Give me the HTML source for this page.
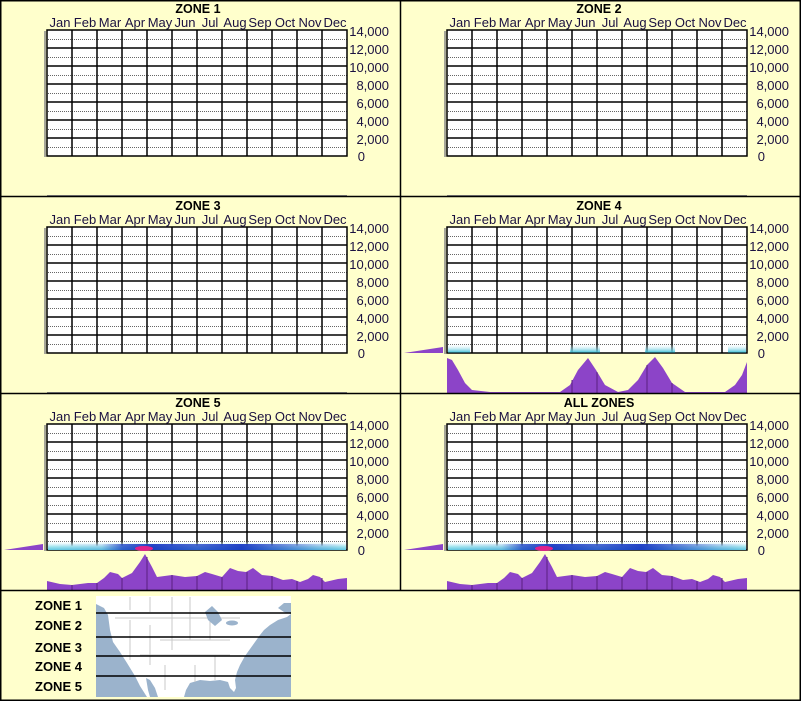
<!DOCTYPE html>
<html><head><meta charset="utf-8"><style>
html,body{margin:0;padding:0;background:#ffffcc;}
svg{display:block;font-family:"Liberation Sans",Arial,sans-serif;}
</style></head><body>
<svg width="801" height="701" viewBox="0 0 801 701" xmlns="http://www.w3.org/2000/svg">
<defs>
<linearGradient id="cy" x1="0" y1="0" x2="0" y2="1"><stop offset="0" stop-color="#fff" stop-opacity="0"/><stop offset="1" stop-color="#40c0d8"/></linearGradient>
<linearGradient id="lc" x1="0" y1="0" x2="0" y2="1"><stop offset="0" stop-color="#fff" stop-opacity="0"/><stop offset="0.6" stop-color="#a8e8f0"/><stop offset="1" stop-color="#60c8e0"/></linearGradient>
<linearGradient id="bh" x1="0" y1="0" x2="1" y2="0">
<stop offset="0" stop-color="#1030c0" stop-opacity="0"/>
<stop offset="0.18" stop-color="#1030c0" stop-opacity="0.1"/>
<stop offset="0.25" stop-color="#1030c0" stop-opacity="0.7"/>
<stop offset="0.35" stop-color="#1030c0" stop-opacity="0.9"/>
<stop offset="0.5" stop-color="#1030c0" stop-opacity="0.7"/>
<stop offset="0.65" stop-color="#1030c0" stop-opacity="0.9"/>
<stop offset="0.8" stop-color="#1030c0" stop-opacity="0.5"/>
<stop offset="0.9" stop-color="#1030c0" stop-opacity="0.2"/>
<stop offset="1" stop-color="#1030c0" stop-opacity="0"/>
</linearGradient>
<g id="panel">
<rect x="47" y="30" width="300" height="126" fill="#fff"/>
<g stroke="#666" stroke-width="1" stroke-dasharray="1,1">
<line x1="48" y1="39.5" x2="347" y2="39.5"/><line x1="48" y1="57.5" x2="347" y2="57.5"/><line x1="48" y1="75.5" x2="347" y2="75.5"/><line x1="48" y1="93.5" x2="347" y2="93.5"/><line x1="48" y1="111.5" x2="347" y2="111.5"/><line x1="48" y1="129.5" x2="347" y2="129.5"/><line x1="48" y1="147.5" x2="347" y2="147.5"/>
</g>
<g stroke="#000" stroke-width="1.5">
<line x1="47" y1="48" x2="347" y2="48"/><line x1="47" y1="66" x2="347" y2="66"/><line x1="47" y1="84" x2="347" y2="84"/><line x1="47" y1="102" x2="347" y2="102"/><line x1="47" y1="120" x2="347" y2="120"/><line x1="47" y1="138" x2="347" y2="138"/>
<line x1="72" y1="30" x2="72" y2="156"/><line x1="97" y1="30" x2="97" y2="156"/><line x1="122" y1="30" x2="122" y2="156"/><line x1="147" y1="30" x2="147" y2="156"/><line x1="172" y1="30" x2="172" y2="156"/><line x1="197" y1="30" x2="197" y2="156"/><line x1="222" y1="30" x2="222" y2="156"/><line x1="247" y1="30" x2="247" y2="156"/><line x1="272" y1="30" x2="272" y2="156"/><line x1="297" y1="30" x2="297" y2="156"/><line x1="322" y1="30" x2="322" y2="156"/>
</g>
<rect x="47" y="30" width="300" height="126" fill="none" stroke="#000" stroke-width="1.5"/>
<line x1="45" y1="31" x2="45" y2="157" stroke="#888" stroke-width="1.5"/>
</g>
<g id="heat">
<rect x="48" y="541" width="298" height="9" fill="url(#lc)"/>
<rect x="48" y="544" width="298" height="6" fill="url(#bh)"/>
<ellipse cx="144" cy="548.5" rx="9" ry="2.5" fill="#e0208a"/>
</g>
</defs>
<rect width="801" height="701" fill="#ffffcc"/>
<use href="#panel" x="0" y="0"/><use href="#panel" x="400" y="0"/>
<use href="#panel" x="0" y="197"/><use href="#panel" x="400" y="197"/>
<use href="#panel" x="0" y="394"/><use href="#panel" x="400" y="394"/>
<line x1="47" y1="196" x2="347" y2="196" stroke="#888" stroke-width="2"/>
<line x1="447" y1="196" x2="747" y2="196" stroke="#888" stroke-width="2"/>
<line x1="47" y1="393" x2="347" y2="393" stroke="#888" stroke-width="2"/>

<g fill="url(#cy)">
<rect x="448" y="344" width="22" height="8.5"/><rect x="570" y="344" width="30" height="8.5"/><rect x="645" y="344" width="30" height="8.5"/><rect x="728" y="344" width="18" height="8.5"/>
</g>
<polygon points="404,353 443,347 443,353" fill="#8c44c8"/>
<polygon points="447,393 447,358 452,360 458,370 465,383 472,390 490,392 560,392 570,385 578,370 588,358 596,370 605,385 618,392 628,390 638,380 647,365 655,357 663,368 672,383 685,392 725,392 735,385 742,375 747,362 747,393" fill="#8c44c8"/>
<g stroke="#5a2080" stroke-width="1"><line x1="572" y1="380" x2="572" y2="393"/><line x1="597" y1="372" x2="597" y2="393"/><line x1="647" y1="365" x2="647" y2="393"/><line x1="672" y1="383" x2="672" y2="393"/></g>

<use href="#heat"/>
<use href="#heat" x="400"/>
<polygon points="4,550 43,544 43,550" fill="#8c44c8"/>
<polygon points="404,550 443,544 443,550" fill="#8c44c8"/>
<g id="sp5"><polygon points="47,590 47,581 60,584 72,585 88,583 97,583 104,578 110,572 118,574 122,578 132,573 140,562 145,554 152,567 157,577 172,575 185,577 197,576 205,572 212,574 222,577 230,568 238,571 246,572 253,568 262,575 272,576 283,580 292,579 300,582 308,579 313,575 320,577 325,582 338,579 347,578 347,590" fill="#8c44c8"/>
<g stroke="#5a2080" stroke-width="1"><line x1="72" y1="585" x2="72" y2="590"/><line x1="97" y1="583" x2="97" y2="590"/><line x1="122" y1="578" x2="122" y2="590"/><line x1="147" y1="557" x2="147" y2="590"/><line x1="172" y1="575" x2="172" y2="590"/><line x1="197" y1="576" x2="197" y2="590"/><line x1="222" y1="577" x2="222" y2="590"/><line x1="247" y1="572" x2="247" y2="590"/><line x1="272" y1="576" x2="272" y2="590"/><line x1="297" y1="581" x2="297" y2="590"/><line x1="322" y1="578" x2="322" y2="590"/></g></g>
<use href="#sp5" x="400" y="0"/>

<g stroke="#000" stroke-width="1.5" fill="none">
<rect x="0.75" y="0.75" width="799.5" height="699.5"/>
<line x1="400.5" y1="0" x2="400.5" y2="590"/>
<line x1="0" y1="196.5" x2="801" y2="196.5"/>
<line x1="0" y1="393.5" x2="801" y2="393.5"/>
<line x1="0" y1="590.5" x2="801" y2="590.5"/>
</g>

<g font-size="12.5" font-weight="bold" text-anchor="middle" fill="#000">
<text x="198" y="13">ZONE 1</text><text x="599" y="13">ZONE 2</text>
<text x="198" y="210">ZONE 3</text><text x="599" y="210">ZONE 4</text>
<text x="198" y="407">ZONE 5</text><text x="599" y="407">ALL ZONES</text>
</g>
<g font-size="13" text-anchor="middle" fill="#1a1040">
<g><text x="60" y="27">Jan</text><text x="85" y="27">Feb</text><text x="110" y="27">Mar</text><text x="135" y="27">Apr</text><text x="160" y="27">May</text><text x="185" y="27">Jun</text><text x="210" y="27">Jul</text><text x="235" y="27">Aug</text><text x="260" y="27">Sep</text><text x="285" y="27">Oct</text><text x="310" y="27">Nov</text><text x="335" y="27">Dec</text></g>
<g transform="translate(400,0)"><text x="60" y="27">Jan</text><text x="85" y="27">Feb</text><text x="110" y="27">Mar</text><text x="135" y="27">Apr</text><text x="160" y="27">May</text><text x="185" y="27">Jun</text><text x="210" y="27">Jul</text><text x="235" y="27">Aug</text><text x="260" y="27">Sep</text><text x="285" y="27">Oct</text><text x="310" y="27">Nov</text><text x="335" y="27">Dec</text></g>
<g transform="translate(0,197)"><text x="60" y="27">Jan</text><text x="85" y="27">Feb</text><text x="110" y="27">Mar</text><text x="135" y="27">Apr</text><text x="160" y="27">May</text><text x="185" y="27">Jun</text><text x="210" y="27">Jul</text><text x="235" y="27">Aug</text><text x="260" y="27">Sep</text><text x="285" y="27">Oct</text><text x="310" y="27">Nov</text><text x="335" y="27">Dec</text></g>
<g transform="translate(400,197)"><text x="60" y="27">Jan</text><text x="85" y="27">Feb</text><text x="110" y="27">Mar</text><text x="135" y="27">Apr</text><text x="160" y="27">May</text><text x="185" y="27">Jun</text><text x="210" y="27">Jul</text><text x="235" y="27">Aug</text><text x="260" y="27">Sep</text><text x="285" y="27">Oct</text><text x="310" y="27">Nov</text><text x="335" y="27">Dec</text></g>
<g transform="translate(0,394)"><text x="60" y="27">Jan</text><text x="85" y="27">Feb</text><text x="110" y="27">Mar</text><text x="135" y="27">Apr</text><text x="160" y="27">May</text><text x="185" y="27">Jun</text><text x="210" y="27">Jul</text><text x="235" y="27">Aug</text><text x="260" y="27">Sep</text><text x="285" y="27">Oct</text><text x="310" y="27">Nov</text><text x="335" y="27">Dec</text></g>
<g transform="translate(400,394)"><text x="60" y="27">Jan</text><text x="85" y="27">Feb</text><text x="110" y="27">Mar</text><text x="135" y="27">Apr</text><text x="160" y="27">May</text><text x="185" y="27">Jun</text><text x="210" y="27">Jul</text><text x="235" y="27">Aug</text><text x="260" y="27">Sep</text><text x="285" y="27">Oct</text><text x="310" y="27">Nov</text><text x="335" y="27">Dec</text></g>
</g>
<g font-size="13" fill="#1a1040" text-anchor="end">
<g><text x="389" y="36">14,000</text><text x="389" y="54">12,000</text><text x="389" y="72">10,000</text><text x="389" y="90">8,000</text><text x="389" y="108">6,000</text><text x="389" y="126">4,000</text><text x="389" y="144">2,000</text><text x="365" y="161">0</text></g>
<g transform="translate(400,0)"><text x="389" y="36">14,000</text><text x="389" y="54">12,000</text><text x="389" y="72">10,000</text><text x="389" y="90">8,000</text><text x="389" y="108">6,000</text><text x="389" y="126">4,000</text><text x="389" y="144">2,000</text><text x="365" y="161">0</text></g>
<g transform="translate(0,197)"><text x="389" y="36">14,000</text><text x="389" y="54">12,000</text><text x="389" y="72">10,000</text><text x="389" y="90">8,000</text><text x="389" y="108">6,000</text><text x="389" y="126">4,000</text><text x="389" y="144">2,000</text><text x="365" y="161">0</text></g>
<g transform="translate(400,197)"><text x="389" y="36">14,000</text><text x="389" y="54">12,000</text><text x="389" y="72">10,000</text><text x="389" y="90">8,000</text><text x="389" y="108">6,000</text><text x="389" y="126">4,000</text><text x="389" y="144">2,000</text><text x="365" y="161">0</text></g>
<g transform="translate(0,394)"><text x="389" y="36">14,000</text><text x="389" y="54">12,000</text><text x="389" y="72">10,000</text><text x="389" y="90">8,000</text><text x="389" y="108">6,000</text><text x="389" y="126">4,000</text><text x="389" y="144">2,000</text><text x="365" y="161">0</text></g>
<g transform="translate(400,394)"><text x="389" y="36">14,000</text><text x="389" y="54">12,000</text><text x="389" y="72">10,000</text><text x="389" y="90">8,000</text><text x="389" y="108">6,000</text><text x="389" y="126">4,000</text><text x="389" y="144">2,000</text><text x="365" y="161">0</text></g>
</g>

<!-- map -->
<rect x="96" y="596" width="195" height="101" fill="#9bb3cc"/>
<polygon points="96,596 291,596 291,603 284,603 278,608 284,612 291,614 287,617 278,620 270,625 264,630 260,635 255,642 250,649 245,656 240,665 237,672 235,680 236,688 234,692 230,688 228,682 220,680 210,681 200,680 190,683 186,690 184,697 158,697 155,688 150,680 146,678 148,690 150,697 147,697 140,686 135,676 127,663 120,652 113,642 110,630 108,615 104,608 96,604" fill="#fff"/>
<g stroke="#c8c8c8" stroke-width="1" fill="none">
<path d="M130,597 L130,610 M150,597 L150,612 M172,597 L172,650 M190,597 L190,640 M210,608 L210,640 M115,618 L240,618 M130,620 L130,660 M150,625 L150,665 M160,640 L230,640 M140,655 L230,655 M165,665 L165,690 M195,665 L195,682 M215,655 L215,680"/>
</g>
<g fill="#9bb3cc"><path d="M205,612 L212,606 L218,612 L222,620 L215,626 L208,620 Z"/><ellipse cx="232" cy="623" rx="6" ry="2.5"/></g>
<g stroke="#000" stroke-width="1.5">
<line x1="96" y1="613" x2="291" y2="613"/><line x1="96" y1="637" x2="291" y2="637"/>
<line x1="96" y1="656" x2="291" y2="656"/><line x1="96" y1="676" x2="291" y2="676"/>
</g>
<g font-size="13" font-weight="bold" fill="#000">
<text x="35" y="610">ZONE 1</text><text x="35" y="630">ZONE 2</text><text x="35" y="652">ZONE 3</text><text x="35" y="671">ZONE 4</text><text x="35" y="691">ZONE 5</text>
</g>
</svg>
</body></html>
